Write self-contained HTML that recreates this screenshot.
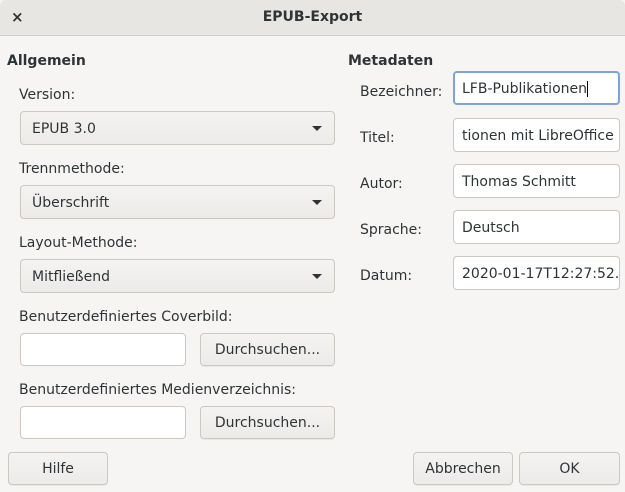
<!DOCTYPE html><html><head><style>
body{margin:0;width:625px;height:492px;background:#f6f5f4;font-family:"DejaVu Sans","Liberation Sans",sans-serif;font-size:14px;color:#2e3436;position:relative;overflow:hidden}
.a{position:absolute;white-space:nowrap}
.tb{position:absolute;left:0;top:0;width:625px;height:35px;background:#e8e6e3;border-bottom:1px solid #d0ccc8;border-radius:6px 6px 0 0}
.box{position:absolute;box-sizing:border-box;border:1px solid #cdc7c2;border-radius:4px;background:#fff;padding-left:8px;line-height:34px;overflow:hidden;white-space:nowrap}
.btn{position:absolute;box-sizing:border-box;border:1px solid #cdc7c2;border-radius:4px;background:linear-gradient(#f4f3f2,#edebe9);text-align:center;line-height:32px;box-shadow:0 1px 0 rgba(0,0,0,.05)}
.dd{background:linear-gradient(#f4f3f2,#edebe9);padding-left:11px}
.dd:after{content:"";position:absolute;right:12px;top:14px;border-left:5px solid transparent;border-right:5px solid transparent;border-top:5px solid #2e3436}
</style></head><body>
<div class="tb"></div>
<div class="a" style="left:11px;top:8px;font-weight:bold;font-size:15px">×</div>
<div class="a" style="left:0;width:625px;text-align:center;top:9px;font-weight:bold">EPUB-Export</div>
<div class="a" style="left:7px;top:53px;font-weight:bold">Allgemein</div>
<div class="a" style="left:19px;top:87px">Version:</div>
<div class="box dd" style="left:20px;top:111px;width:315px;height:34px">EPUB 3.0</div>
<div class="a" style="left:19px;top:161px">Trennmethode:</div>
<div class="box dd" style="left:20px;top:185px;width:315px;height:34px">Überschrift</div>
<div class="a" style="left:19px;top:235px">Layout-Methode:</div>
<div class="box dd" style="left:20px;top:259px;width:315px;height:34px">Mitfließend</div>
<div class="a" style="left:19px;top:309px">Benutzerdefiniertes Coverbild:</div>
<div class="box" style="left:20px;top:333px;width:166px;height:33px"></div>
<div class="btn" style="left:200px;top:333px;width:135px;height:33px">Durchsuchen...</div>
<div class="a" style="left:19px;top:382px">Benutzerdefiniertes Medienverzeichnis:</div>
<div class="box" style="left:20px;top:406px;width:166px;height:33px"></div>
<div class="btn" style="left:200px;top:406px;width:135px;height:33px">Durchsuchen...</div>
<div class="a" style="left:348px;top:53px;font-weight:bold">Metadaten</div>
<div class="a" style="left:360px;top:84px">Bezeichner:</div>
<div class="box" style="left:453px;top:71px;width:167px;height:34px;border:2px solid #7ba4dc;padding-left:7px;line-height:32px">LFB-Publikatione<span style="border-right:1px solid #000">n</span></div>
<div class="a" style="left:360px;top:130px">Titel:</div>
<div class="box" style="left:453px;top:118px;width:167px;height:34px">tionen mit LibreOffice</div>
<div class="a" style="left:360px;top:176px">Autor:</div>
<div class="box" style="left:453px;top:164px;width:167px;height:34px">Thomas Schmitt</div>
<div class="a" style="left:360px;top:222px">Sprache:</div>
<div class="box" style="left:453px;top:210px;width:167px;height:34px">Deutsch</div>
<div class="a" style="left:360px;top:268px">Datum:</div>
<div class="box" style="left:453px;top:256px;width:167px;height:34px">2020-01-17T12:27:52.1</div>
<div class="btn" style="left:8px;top:452px;width:100px;height:33px">Hilfe</div>
<div class="btn" style="left:413px;top:452px;width:100px;height:33px">Abbrechen</div>
<div class="btn" style="left:519px;top:452px;width:101px;height:33px">OK</div>
</body></html>
